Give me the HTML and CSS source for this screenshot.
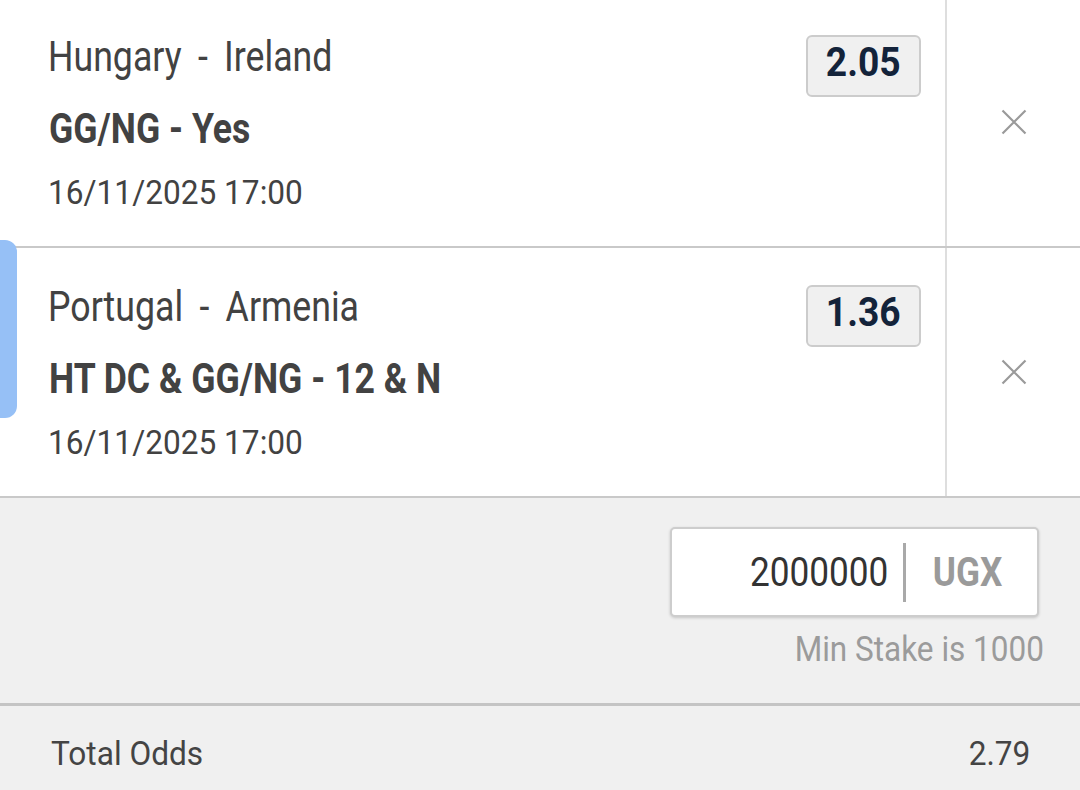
FILE: index.html
```html
<!DOCTYPE html>
<html lang="en">
<head>
<meta charset="utf-8">
<title>Bet slip</title>
<link rel="stylesheet" href="styles.css">
</head>
<body>
<div class="slip">
  <div class="bet">
    <div class="bet-main">
      <div class="bet-info">
        <div class="teams"><span class="sx">Hungary - Ireland</span></div>
        <div class="market"><span class="sx">GG/NG - Yes</span></div>
        <div class="date"><span class="sx">16/11/2025 17:00</span></div>
      </div>
      <div class="odds"><span class="sx-c">2.05</span></div>
    </div>
    <div class="bet-close">
      <svg class="x-icon" width="26" height="26" viewBox="0 0 26 26"><path d="M1.5 1.5 L24.5 24.5 M24.5 1.5 L1.5 24.5"/></svg>
    </div>
  </div>
  <div class="bet">
    <span class="tab"></span>
    <div class="bet-main">
      <div class="bet-info">
        <div class="teams"><span class="sx">Portugal - Armenia</span></div>
        <div class="market"><span class="sx">HT DC &amp; GG/NG - 12 &amp; N</span></div>
        <div class="date"><span class="sx">16/11/2025 17:00</span></div>
      </div>
      <div class="odds"><span class="sx-c">1.36</span></div>
    </div>
    <div class="bet-close">
      <svg class="x-icon" width="26" height="26" viewBox="0 0 26 26"><path d="M1.5 1.5 L24.5 24.5 M24.5 1.5 L1.5 24.5"/></svg>
    </div>
  </div>
  <div class="stake-area">
    <div class="stake-box">
      <div class="stake-input"><span class="sx-r">2000000</span></div>
      <span class="stake-sep"></span>
      <div class="stake-cur"><span class="sx-c">UGX</span></div>
    </div>
    <div class="min-stake"><span class="sx-r">Min Stake is 1000</span></div>
  </div>
  <div class="total">
    <span class="sx">Total Odds</span>
    <span class="sx-r">2.79</span>
  </div>
</div>
</body>
</html>
```
FILE: styles.css
```css
html, body {
  margin: 0;
  padding: 0;
  background: #f0f0f0;
}
body {
  width: 1080px;
  height: 790px;
  overflow: hidden;
  font-family: Roboto, "Noto Sans", sans-serif;
  color: #424242;
}
.slip {
  margin-top: -2px;
}
.sx, .sx-r, .sx-c {
  display: inline-block;
  white-space: nowrap;
}
.sx { transform-origin: left center; }
.sx-r { transform-origin: right center; }
.sx-c { transform-origin: center center; }

.bet {
  position: relative;
  display: flex;
  height: 248px;
  border-bottom: 2px solid #c9c9c9;
  background: #fff;
}
.bet-main {
  width: 947px;
  box-sizing: border-box;
  padding: 37px 24px 0 48px;
  display: flex;
  justify-content: space-between;
  align-items: flex-start;
  border-right: 2px solid #dedede;
}
.bet-close {
  flex: 1;
  display: flex;
  align-items: center;
  justify-content: center;
}
.x-icon path {
  stroke: #9a9a9a;
  stroke-width: 2.2;
  fill: none;
}
.tab {
  position: absolute;
  left: 0;
  top: -8px;
  width: 17px;
  height: 178px;
  background: #96c0f6;
  border-radius: 0 12px 12px 0;
  z-index: 2;
}
.teams {
  font-size: 43px;
  line-height: 43px;
  word-spacing: 9px;
}
.teams .sx { transform: scaleX(0.83); }
.market {
  margin-top: 30px;
  font-size: 42px;
  line-height: 42px;
  font-weight: 700;
  padding-left: 1px;
}
.market .sx { transform: scaleX(0.848); }
.date {
  margin-top: 25px;
  font-size: 34px;
  line-height: 34px;
}
.date .sx { transform: scaleX(0.93); }

.odds {
  width: 115px;
  height: 62px;
  box-sizing: border-box;
  border: 2px solid #cccccc;
  border-radius: 6px;
  background: #f0f0f0;
  display: flex;
  justify-content: center;
  font-size: 40px;
  line-height: 52px;
  font-weight: 700;
  color: #13233a;
}
.odds .sx-c { transform: scaleX(0.93); }

.stake-area {
  height: 208px;
  box-sizing: border-box;
  padding: 29px 41px 0 0;
  border-bottom: 3px solid #c4c4c4;
  background: #f0f0f0;
  display: flex;
  flex-direction: column;
  align-items: flex-end;
}
.stake-box {
  width: 369px;
  height: 90px;
  box-sizing: border-box;
  border: 2px solid #cdcdcd;
  border-radius: 5px;
  background: #fff;
  box-shadow: 0 1px 3px rgba(0, 0, 0, 0.18);
  display: flex;
  align-items: center;
  padding-top: 2px;
}
.stake-input {
  width: 231px;
  box-sizing: border-box;
  padding-right: 15px;
  text-align: right;
  font-size: 40px;
  line-height: 40px;
  color: #333;
}
.stake-input .sx-r { transform: scaleX(0.88); }
.stake-sep {
  width: 3px;
  height: 59px;
  background: #a9a9a9;
  margin-top: -2px;
}
.stake-cur {
  flex: 1;
  padding-right: 8px;
  text-align: center;
  font-size: 40px;
  line-height: 40px;
  font-weight: 700;
  color: #9a9a9a;
}
.stake-cur .sx-c { transform: scaleX(0.88); }
.min-stake {
  margin-top: 15px;
  margin-right: -5px;
  font-size: 35px;
  line-height: 35px;
  color: #9b9b9b;
}
.min-stake .sx-r { transform: scaleX(0.9); }

.total {
  height: 84px;
  box-sizing: border-box;
  padding: 30px 50px 0 51px;
  display: flex;
  justify-content: space-between;
  font-size: 34px;
  line-height: 34px;
  color: #444;
  background: #f0f0f0;
}
.total .sx, .total .sx-r { transform: scaleX(0.93); }
```
